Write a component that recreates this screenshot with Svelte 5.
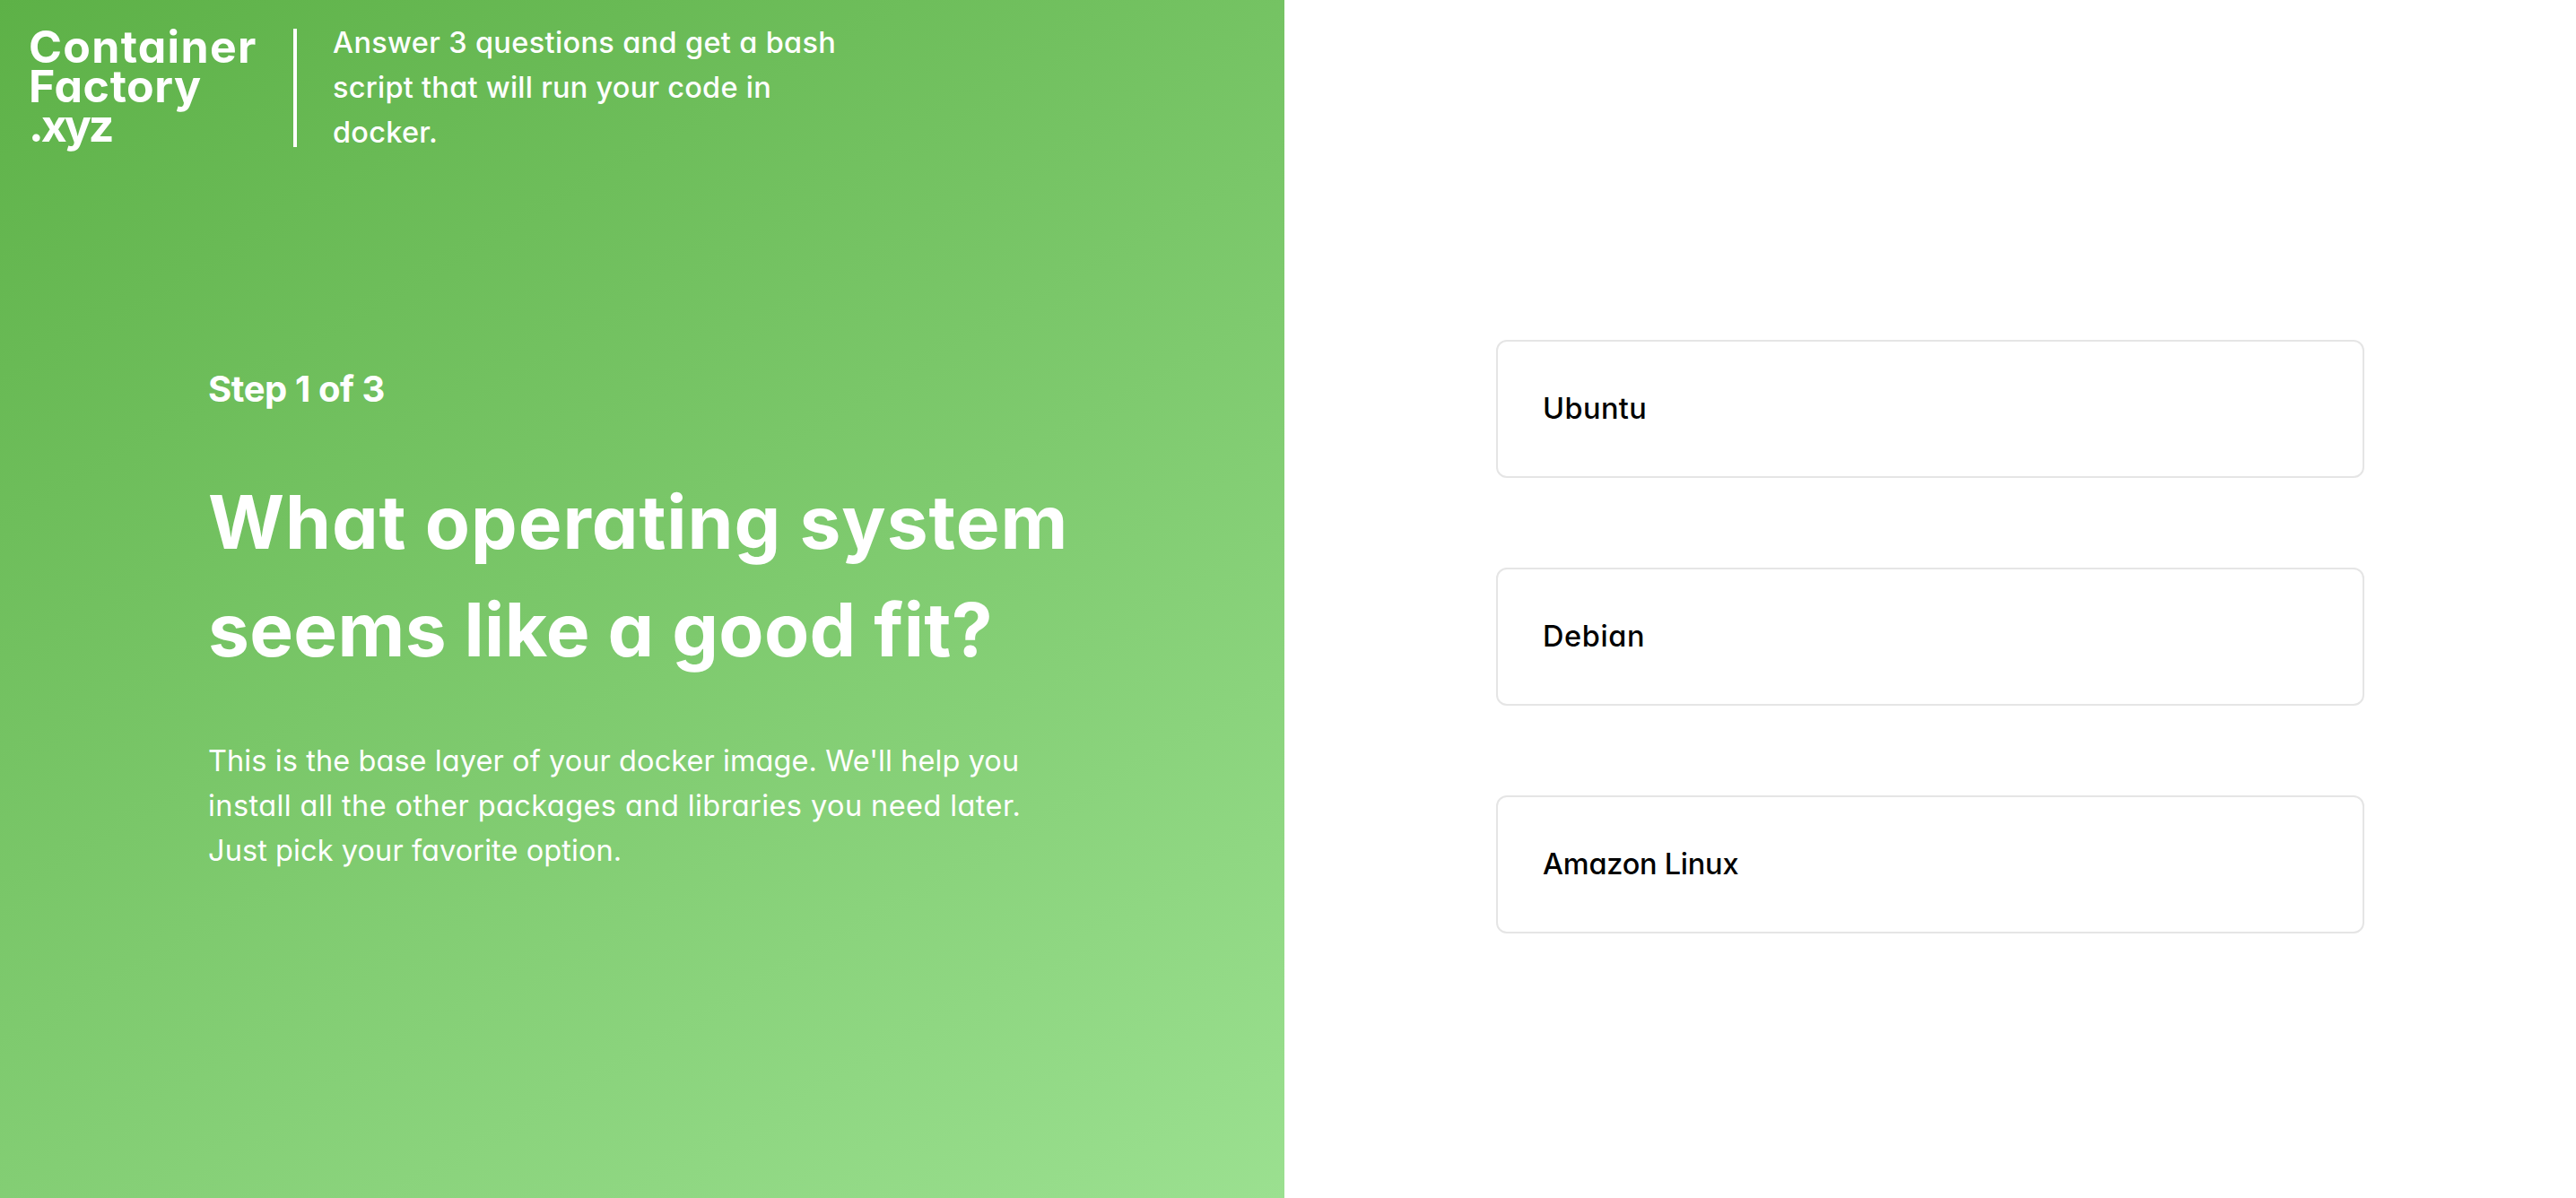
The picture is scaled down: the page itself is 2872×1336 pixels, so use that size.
<script lang="ts">
	// First step of the wizard: pick the base operating system

	interface Props {
		currentStep?: number;
		totalSteps?: number;
	}

	let { currentStep = 1, totalSteps = 3 }: Props = $props();

	// tracking is the letter spacing in px
	const logo = [
		{ text: 'Container', tracking: 1.3 },
		{ text: 'Factory', tracking: 0.6 },
		{ text: '.xyz', tracking: -3 }
	];

	const tagline = [
		{ text: 'Answer 3 questions and get a bash', tracking: 0.34 },
		{ text: 'script that will run your code in', tracking: 0.25 },
		{ text: 'docker.', tracking: 0.25 }
	];

	const title = [
		{ text: 'What operating system', tracking: 0.92 },
		{ text: 'seems like a good fit?', tracking: 0.3 }
	];

	const description = [
		{ text: "This is the base layer of your docker image. We'll help you", tracking: 0.08 },
		{ text: 'install all the other packages and libraries you need later.', tracking: 0.41 },
		{ text: 'Just pick your favorite option.', tracking: 0.08 }
	];

	const options = [
		{ text: 'Ubuntu', tracking: 0.4 },
		{ text: 'Debian', tracking: 0.6 },
		{ text: 'Amazon Linux', tracking: -0.25 }
	];
</script>

{#snippet lines(items: { text: string; tracking: number }[])}
	{#each items as item}
		<span class="line" style="letter-spacing: {item.tracking}px">{item.text}</span>
	{/each}
{/snippet}

<div class="page">
	<section class="intro">
		<header class="header">
			<h1 class="logo">{@render lines(logo)}</h1>
			<div class="divider"></div>
			<p class="tagline">{@render lines(tagline)}</p>
		</header>

		<div class="question">
			<h3 class="step">Step {currentStep} of {totalSteps}</h3>
			<h2 class="title">{@render lines(title)}</h2>
			<p class="description">{@render lines(description)}</p>
		</div>
	</section>

	<section class="choices">
		{#each options as option}
			<button class="option" style="letter-spacing: {option.tracking}px">{option.text}</button>
		{/each}
	</section>
</div>

<style>
	:global(body) {
		margin: 0;
		background: #fff;
	}

	.page {
		display: flex;
		height: 100vh;
		font-family: Inter, 'Open Sans', sans-serif;
		font-feature-settings: 'cv11';
		font-size: 32.5px;
		line-height: 50px;
	}

	.line {
		display: block;
		white-space: nowrap;
	}

	/* Left panel */
	.intro {
		flex: none;
		width: 1432px;
		color: #fff;
		background: linear-gradient(150deg, #5db147, #9be090);
	}

	.header {
		display: flex;
		height: 132px;
		padding: 32px 32px 0;
	}

	.logo {
		width: 295px;
		margin: -2px 0 0;
		font-size: 50px;
		font-weight: 700;
		line-height: 44px;
	}

	.divider {
		width: 4px;
		background: #fff;
	}

	.tagline {
		margin: -9px 0 0 40px;
		font-weight: 500;
	}

	/* Question */
	.question {
		padding: 240px 0 0 232px;
	}

	.step {
		margin: 0 0 59px;
		font-size: 40px;
		font-weight: 700;
		line-height: 60px;
		letter-spacing: -0.4px;
	}

	.title {
		margin: 0 0 61px;
		font-size: 82px;
		font-weight: 700;
		line-height: 120px;
	}

	.description {
		margin: 0;
	}

	/* Right panel */
	.choices {
		display: flex;
		flex: 1;
		flex-direction: column;
		align-items: center;
		gap: 100px;
		padding-top: 379px;
	}

	.option {
		box-sizing: border-box;
		width: 968px;
		height: 154px;
		padding: 0 50px;
		border: 2px solid #e5e5e5;
		border-radius: 12px;
		background: #fff;
		color: #000;
		font: inherit;
		font-weight: 500;
		font-feature-settings: inherit;
		text-align: left;
		cursor: pointer;
	}
</style>
